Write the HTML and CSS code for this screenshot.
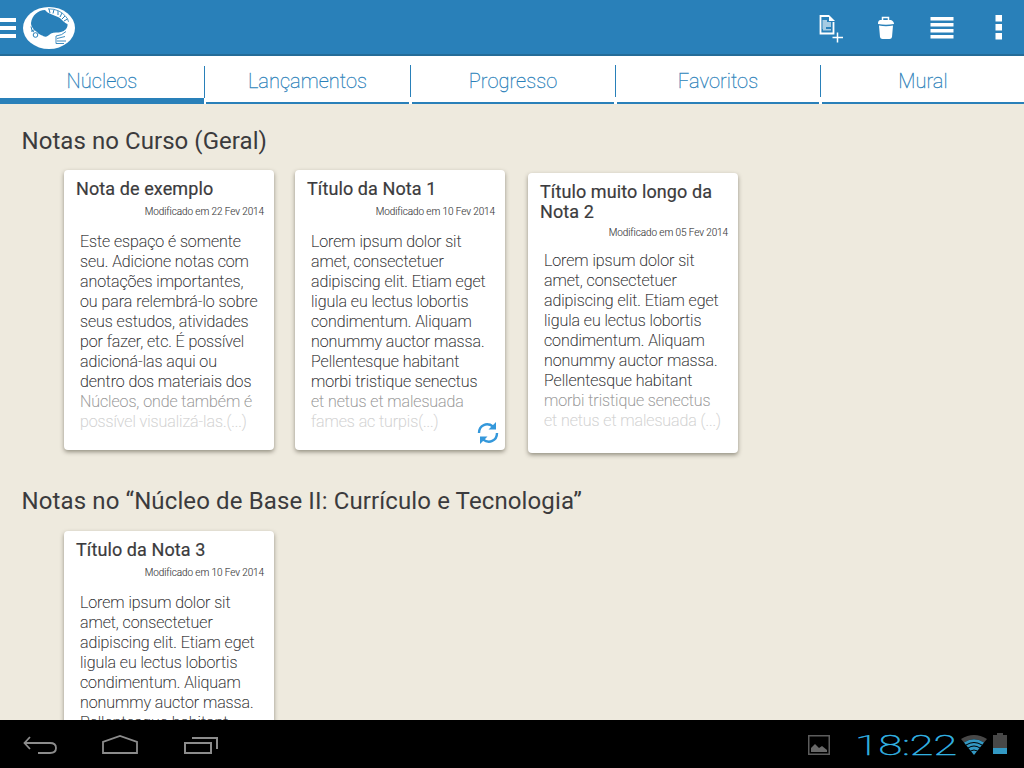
FILE: index.html
```html
<!DOCTYPE html>
<html lang="pt-BR">
<head>
<meta charset="utf-8">
<title>Notas</title>
<link rel="stylesheet" href="styles.css">
</head>
<body>
<div class="app">
  <header class="bar">
    <svg class="menu" width="16" height="20" viewBox="0 0 16 20"><path fill="#fff" d="M0 0h16v4H0zM0 8h16v4H0zM0 16h16v4H0z"/></svg>
    <svg class="logo" width="54" height="44" viewBox="0 0 54 44">
      <ellipse cx="27" cy="22" rx="26" ry="21" fill="#fff"/>
      <path d="M9 17C10 9 16 4.500 23 4C26 8 31 8.500 36 11C40 13 42 17 45.500 18C46 22 43 25 39 26C36 27 32 26 29 27.500C26 30 25 31 22 30.500C20 29 17 29 15 26C12 24 9 21 9 17Z" fill="#2980b9"/>
      <path d="M26 2.800q12 0 18 8q2 2 2.500 5" fill="none" stroke="#2980b9" stroke-width=".8"/>
      <path d="M27 3l1 4M32 3.500l-1 4M36 5v4M40 7l-2 4M43 10l-3 3M45.500 13l-3.500 2" fill="none" stroke="#2980b9" stroke-width="1"/>
      <path d="M9 20.500l1 4 4-1M9 25q2 0 3 1" fill="none" stroke="#2980b9"/>
      <circle cx="13.500" cy="29" r="2.300" fill="none" stroke="#2980b9"/>
      <path d="M44 25.500q-4 4-10 4.500v7.500h8M35 32.500l8-2M35 35h9" fill="none" stroke="#2980b9" stroke-width=".9"/>
    </svg>
    <div class="actions">
      <svg width="26" height="30" viewBox="0 0 26 30"><path d="M11 2H2.500v17.500h13V8" fill="none" stroke="#fff" stroke-width="1.800"/><path d="M11 1l6 6h-6z" fill="#fff"/><path d="M4.500 6H9v2h4v5H8v2H4.500zM5 15h8v1.500H5z" fill="#a5cbe3"/><path d="M14 23.500h11M19.500 18v11" stroke="#2980b9" stroke-width="4"/><path d="M14.500 23.500H25M19.500 18.500v10" stroke="#fff" stroke-width="1.500"/></svg>
      <svg width="18" height="24" viewBox="0 0 18 24"><path d="M5.500 5V1.500h6V5" fill="none" stroke="#fff" stroke-width="1.500"/><path d="M3 4h11c2 1 3 2 3 4q-8 1.500-16 0C1 6 1 5 3 4zM2 9.500q7 1.500 14 0L15 21q-.3 2-2.500 2h-7Q3.300 23 3 21z" fill="#fff"/></svg>
      <svg width="24" height="22" viewBox="0 0 24 22"><path fill="#fff" d="M.5 0h23v3.500H.5zM.5 6h23v3.500H.5zM.5 12h23v3.500H.5zM.5 18h23v3.500H.5z"/></svg>
      <svg width="8" height="25" viewBox="0 0 8 25"><path fill="#fff" d="M.5 0h6.500v6.500H.5zM.5 9h6.500v6.500H.5zM.5 18h6.500v6.500H.5z"/></svg>
    </div>
  </header>
  <nav class="tabs">
    <a class="tab on">Núcleos</a><i class="sep first"></i>
    <a class="tab two">Lançamentos</a><i class="sep wide"></i>
    <a class="tab">Progresso</a><i class="sep wide"></i>
    <a class="tab">Favoritos</a><i class="sep wide"></i>
    <a class="tab">Mural</a>
  </nav>
  <main class="content">
    <h1 class="heading">Notas no Curso (Geral)</h1>
    <section class="cards">
      <article class="card">
        <h2 class="title">Nota de exemplo</h2>
        <p class="date">Modificado em 22 Fev 2014</p>
        <p class="text">Este espaço é somente<br>seu. Adicione notas com<br>anotações importantes,<br><span class="loose">ou para relembrá-lo sobre</span><br>seus estudos, atividades<br>por fazer, etc. É possível<br>adicioná-las aqui ou<br>dentro dos materiais dos<br><span class="f1">Núcleos, onde também é</span><br><span class="f2">possível visualizá-las.(...)</span></p>
      </article>
      <article class="card">
        <h2 class="title">Título da Nota 1</h2>
        <p class="date">Modificado em 10 Fev 2014</p>
        <p class="text">Lorem ipsum dolor sit<br>amet, consectetuer<br>adipiscing elit. Etiam eget<br>ligula eu lectus lobortis<br>condimentum. Aliquam<br>nonummy auctor massa.<br>Pellentesque habitant<br>morbi tristique senectus<br><span class="f1">et netus et malesuada</span><br><span class="f2">fames ac turpis(...)</span></p>
        <svg class="sync" width="22" height="22" viewBox="0 0 22 22"><path d="M2 11C2 3 10 0 16 4.500M20 11C20 19 12 22 6 17.500" fill="none" stroke="#3498db" stroke-width="2.400"/><path d="M19 0v7.500h-7.500zM3 22v-7.500h7.500z" fill="#3498db"/></svg>
      </article>
      <article class="card low">
        <h2 class="title">Título muito longo da<br>Nota 2</h2>
        <p class="date">Modificado em 05 Fev 2014</p>
        <p class="text">Lorem ipsum dolor sit<br>amet, consectetuer<br>adipiscing elit. Etiam eget<br>ligula eu lectus lobortis<br>condimentum. Aliquam<br>nonummy auctor massa.<br>Pellentesque habitant<br><span class="f1">morbi tristique senectus</span><br><span class="f2">et netus et malesuada (...)</span></p>
      </article>
    </section>
    <h1 class="heading second">Notas no “Núcleo de Base II: Currículo e Tecnologia”</h1>
    <section class="cards">
      <article class="card">
        <h2 class="title">Título da Nota 3</h2>
        <p class="date">Modificado em 10 Fev 2014</p>
        <p class="text">Lorem ipsum dolor sit<br>amet, consectetuer<br>adipiscing elit. Etiam eget<br>ligula eu lectus lobortis<br>condimentum. Aliquam<br>nonummy auctor massa.<br>Pellentesque habitant</p>
      </article>
    </section>
  </main>
  <footer class="system">
    <svg width="34" height="20" viewBox="0 0 34 20"><path d="M7 2L1.500 8L7 14M2 8h25q6 0 6 5t-6 5H15" fill="none" stroke="#8c8c8c" stroke-width="1.800"/></svg>
    <svg class="home" width="38" height="20" viewBox="0 0 38 20"><path d="M2 18V7L19 1l17 6v11z" fill="none" stroke="#8c8c8c" stroke-width="1.800"/></svg>
    <svg class="recent" width="36" height="20" viewBox="0 0 36 20"><path d="M2 8h26v10H2zM9 3h25v11" fill="none" stroke="#8c8c8c" stroke-width="2"/></svg>
    <div class="status">
      <svg width="22" height="20" viewBox="0 0 22 20"><rect x=".75" y=".75" width="20.500" height="18.500" fill="none" stroke="#5c5c5c" stroke-width="1.500"/><path d="M3 17v-4l4-4 4 4 3-2 5 4v2z" fill="#686868"/></svg>
      <svg class="clock" width="101" height="28" viewBox="0 0 101 28"><text x="-3" y="23.500" textLength="102" lengthAdjust="spacingAndGlyphs">18:22</text></svg>
      <svg class="wifi" width="26" height="20" viewBox="0 0 26 20"><path d="M0 4Q13-4 26 4L23 7.500Q13 1 3 7.500z" fill="#484848"/><path d="M3 7.500Q13 1 23 7.500L13 20z" fill="#3399c4"/><path d="M5 10q8-5 16 0M7 13q6-4 12 0M9.500 16q3.500-2 7 0" fill="none" stroke="#000" stroke-width="1"/></svg>
      <svg class="battery" width="14" height="21" viewBox="0 0 14 21"><path d="M0 2h4V0h6v2h4v13H0z" fill="#484848"/><path d="M0 15h14v6H0z" fill="#3399c4"/></svg>
    </div>
  </footer>
</div>
</body>
</html>
```
FILE: styles.css
```css
* { box-sizing: border-box; margin: 0; padding: 0; }
body { font-family: Roboto, sans-serif; background: #eeeade; overflow: hidden; }
svg { display: block; flex: none; }
.app { width: 1024px; height: 768px; display: flex; flex-direction: column; overflow: hidden; }
.bar { flex: none; height: 56px; background: #2980b9; border-bottom: 2px solid #256c98; display: flex; align-items: flex-start; }
.menu { margin-top: 18px; }
.logo { margin: 6px 0 0 6px; }
.actions { margin-left: auto; display: flex; align-items: flex-start; padding: 15px 21px 0 0; }
.actions svg:nth-child(1) { margin-right: 33px; margin-top: -1px; }
.actions svg:nth-child(2) { margin-right: 35px; margin-top: 1px; }
.actions svg:nth-child(3) { margin-right: 41px; margin-top: 2px; }
.tabs { flex: none; height: 48px; background: #fff; display: flex; }
.tab { flex: none; width: 202px; height: 48px; padding-top: 13px; text-align: center; color: #2980b9; font-size: 20px; line-height: 24px; font-weight: 240; letter-spacing: .05px; -webkit-text-stroke: .3px #2980b9; border-bottom: 2px solid #2980b9; }
.tab.on { width: 204px; border-bottom-width: 6px; }
.tab.two { width: 203px; }
.sep { flex: none; width: 2px; height: 32px; margin-top: 9px; border-left: 1px solid #2980b9; }
.sep.first { margin-top: 10px; }
.sep.wide { margin-left: 1px; }
.content { flex: 1; min-height: 0; overflow: hidden; padding: 23px 22px 0; }
.heading { font-size: 24px; line-height: 28px; font-weight: 400; letter-spacing: .06px; color: #3b3b3d; white-space: nowrap; margin-left: -.5px; }
.heading.second { margin-top: 34px; letter-spacing: .12px; }
.cards { display: flex; align-items: flex-start; gap: 21px; padding: 15px 0 0 42px; }
.second + .cards { padding-top: 16px; }
.card { position: relative; width: 210px; height: 280px; padding: 9px 10px 0 12px; background: #fff; border-radius: 4px; box-shadow: 0 2px 4px rgba(60, 55, 40, .5); }
.card.low { margin: 3px 0 0 2px; }
.title { font-size: 18px; line-height: 20px; font-weight: 400; letter-spacing: .1px; -webkit-text-stroke: .2px #3b3b3d; color: #3b3b3d; white-space: nowrap; }
.date { margin-top: 6px; font-size: 10px; line-height: 14px; font-weight: 300; letter-spacing: -.1px; -webkit-text-stroke: .1px #3b3b3d; color: #3b3b3d; text-align: right; }
.text { margin: 13px 0 0 4px; font-size: 16px; line-height: 20px; font-weight: 220; letter-spacing: -.05px; -webkit-text-stroke: .15px currentColor; color: #29292b; white-space: nowrap; }
.loose { letter-spacing: 0; }
.low .date { margin-top: 4px; }
.low .text { margin-top: 11px; }
.f1 { color: #949494; }
.f2 { color: #d0d0d0; }
.sync { position: absolute; right: 6px; bottom: 6px; }
.system { flex: none; height: 48px; background: #000; display: flex; align-items: flex-start; padding: 15px 17px 0 23px; }
.home { margin-left: 44px; }
.recent { margin-left: 44px; }
.status { display: flex; margin-left: auto; }
.clock { margin: -4px 0 0 28px; font-family: Roboto, sans-serif; font-size: 28px; font-weight: 100; fill: #33b5e5; stroke: #33b5e5; stroke-width: .5; overflow: visible; }
.wifi { margin-left: 2px; }
.battery { margin: -2px 0 0 6px; }
```
